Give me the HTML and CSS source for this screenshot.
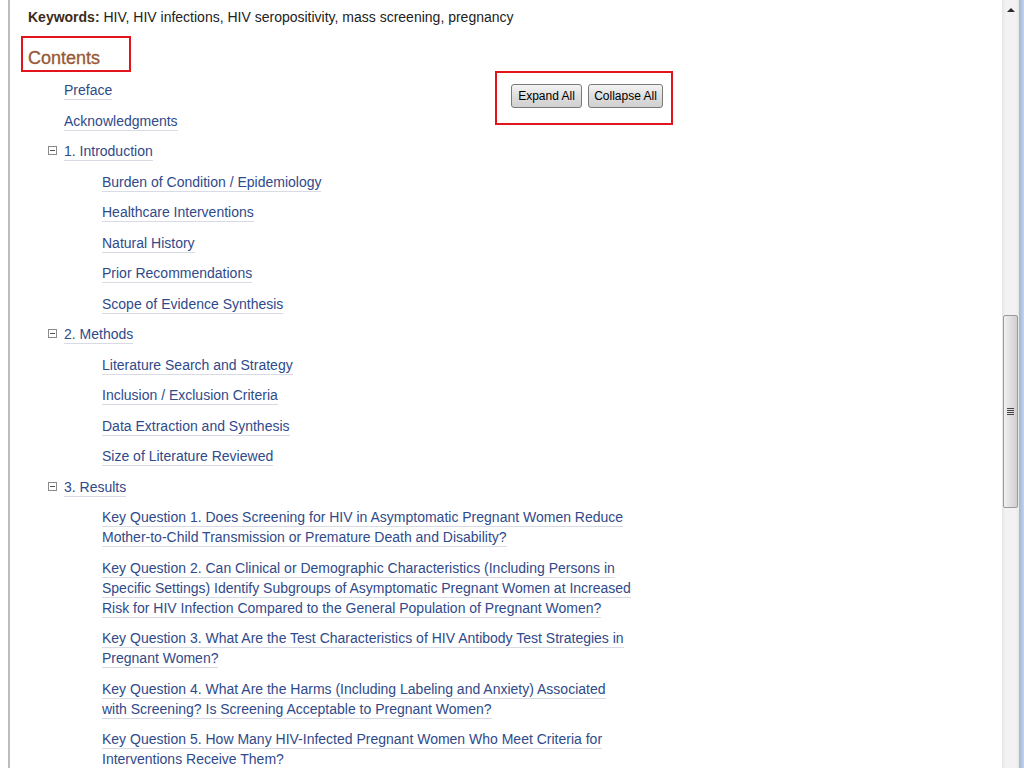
FILE: index.html
```html
<!DOCTYPE html>
<html lang="en">
<head>
    <meta charset="UTF-8">
    <title>Contents</title>
    <link rel="stylesheet" href="styles.css">
</head>
<body>
    <div class="gutter"></div>

    <div class="page">
        <p class="keywords"><b>Keywords:</b> HIV, HIV infections, HIV seropositivity, mass screening, pregnancy</p>

        <h2 class="contents-title">Contents</h2>

        <div class="toc">
            <div class="toc-buttons">
                <button class="toc-btn expand">Expand All</button>
                <button class="toc-btn collapse">Collapse All</button>
            </div>

            <ul class="toc-list">
                <li><a href="#">Preface</a></li>
                <li><a href="#">Acknowledgments</a></li>
                <li>
                    <span class="toggle"></span><a href="#">1. Introduction</a>
                    <ul class="toc-sub">
                        <li><a href="#">Burden of Condition / Epidemiology</a></li>
                        <li><a href="#">Healthcare Interventions</a></li>
                        <li><a href="#">Natural History</a></li>
                        <li><a href="#">Prior Recommendations</a></li>
                        <li><a href="#">Scope of Evidence Synthesis</a></li>
                    </ul>
                </li>
                <li>
                    <span class="toggle"></span><a href="#">2. Methods</a>
                    <ul class="toc-sub">
                        <li><a href="#">Literature Search and Strategy</a></li>
                        <li><a href="#">Inclusion / Exclusion Criteria</a></li>
                        <li><a href="#">Data Extraction and Synthesis</a></li>
                        <li><a href="#">Size of Literature Reviewed</a></li>
                    </ul>
                </li>
                <li>
                    <span class="toggle"></span><a href="#">3. Results</a>
                    <ul class="toc-sub">
                        <li><a href="#">Key Question 1. Does Screening for HIV in Asymptomatic Pregnant Women Reduce Mother-to-Child Transmission or Premature Death and Disability?</a></li>
                        <li><a href="#">Key Question 2. Can Clinical or Demographic Characteristics (Including Persons in Specific Settings) Identify Subgroups of Asymptomatic Pregnant Women at Increased Risk for HIV Infection Compared to the General Population of Pregnant Women?</a></li>
                        <li><a href="#">Key Question 3. What Are the Test Characteristics of HIV Antibody Test Strategies in Pregnant Women?</a></li>
                        <li><a href="#">Key Question 4. What Are the Harms (Including Labeling and Anxiety) Associated with Screening? Is Screening Acceptable to Pregnant Women?</a></li>
                        <li><a href="#">Key Question 5. How Many HIV-Infected Pregnant Women Who Meet Criteria for Interventions Receive Them?</a></li>
                    </ul>
                </li>
            </ul>
        </div>
    </div>

    <div class="scrollbar">
        <div class="scroll-up"></div>
        <div class="scroll-track-top"></div>
        <div class="scroll-thumb"><span class="grip"></span></div>
    </div>
    <div class="frame-edge"></div>
</body>
</html>
```

FILE: styles.css
```css
html, body {
    margin: 0;
    height: 768px;
    overflow: hidden;
}
body {
    display: flex;
    font-family: "Liberation Sans", Arial, sans-serif;
    font-size: 14px;
    color: #000;
    background: #fff;
}
.gutter {
    width: 8px;
    flex: none;
    border-right: 2px solid #b9bcc0;
}
.page {
    flex: 1;
    padding: 7px 0 0 18px;
    overflow: hidden;
}
.keywords {
    margin: 0;
    line-height: 20px;
    color: #222;
}
.keywords b {
    color: #3b2c1c;
}
.contents-title {
    display: inline-block;
    margin: 9px 0 0 -7px;
    padding: 8px 29px 0 5px;
    height: 24px;
    line-height: 24px;
    border: 2px solid #e4141c;
    font-size: 18px;
    font-weight: normal;
    color: #985735;
    -webkit-text-stroke: 0.3px #985735;
}
.toc {
    width: 645px;
    margin-top: 8px;
}
.toc-buttons {
    float: right;
    display: flex;
    gap: 6px;
    height: 28px;
    margin-top: -9px;
    padding: 11px 8px 11px 14px;
    border: 2px solid #e4141c;
}
.toc-btn {
    height: 24px;
    padding: 0;
    white-space: nowrap;
    font-family: "Liberation Sans", Arial, sans-serif;
    font-size: 12px;
    color: #000;
    border: 1px solid #7a7a7a;
    border-radius: 3px;
    background: linear-gradient(#f4f4f4, #dedede 50%, #d0d0d0);
}
.toc-btn.expand {
    width: 71px;
}
.toc-btn.collapse {
    width: 75px;
}
.toc-list,
.toc-sub {
    list-style: none;
    margin: 0;
    padding: 0;
}
.toc-list > li {
    padding-left: 36px;
}
.toc-list li {
    line-height: 20px;
    margin-bottom: 10.5px;
}
.toc-sub {
    margin-top: 10.5px;
    padding-left: 38px;
    width: 532px;
}
.toc-sub li:last-child {
    margin-bottom: 0;
}
.toc a {
    color: #2f4a8a;
    text-decoration: none;
    border-bottom: 1px solid #d8dbe3;
    padding-bottom: 1px;
}
.toggle {
    display: inline-block;
    position: relative;
    width: 7px;
    height: 7px;
    margin-left: -16px;
    margin-right: 7px;
    border: 1px solid #8a8a8a;
    vertical-align: 1px;
}
.toggle::after {
    content: "";
    position: absolute;
    left: 1px;
    right: 1px;
    top: 3px;
    height: 1px;
    background: #555;
}
.scrollbar {
    width: 17px;
    flex: none;
    display: flex;
    flex-direction: column;
    align-items: center;
    background: linear-gradient(to right, #e6e6e6, #f2f2f2 20%, #f2f2f2 80%, #e8e8e8);
}
.scroll-up {
    width: 0;
    height: 0;
    margin-top: 8px;
    border-left: 4px solid transparent;
    border-right: 4px solid transparent;
    border-bottom: 4px solid #2a2a2a;
}
.scroll-track-top {
    height: 303px;
}
.scroll-thumb {
    width: 13px;
    height: 191px;
    display: flex;
    align-items: center;
    justify-content: center;
    border: 1px solid #9a9a9a;
    border-radius: 2px;
    background: linear-gradient(to right, #f0f0f0, #dcdcdc 60%, #cfcfcf);
}
.grip {
    width: 7px;
    height: 7px;
    background: repeating-linear-gradient(#444 0 1px, transparent 1px 2px);
}
.frame-edge {
    width: 5px;
    flex: none;
    background: linear-gradient(to right, #9fb6d4, #c4d4e8);
}
```
